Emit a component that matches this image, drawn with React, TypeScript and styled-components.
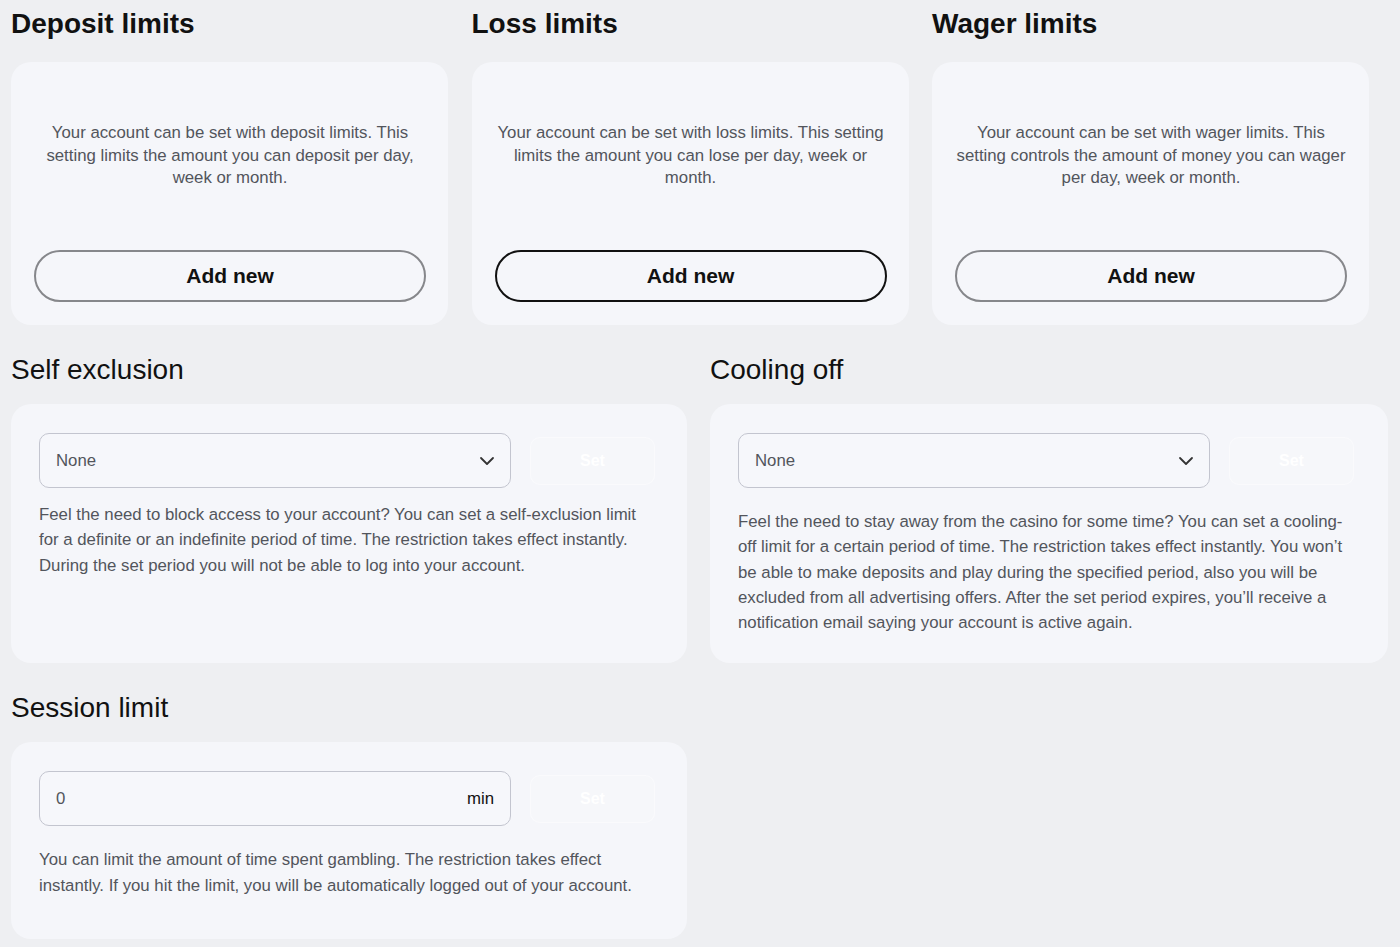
import styled, { createGlobalStyle } from 'styled-components'
import { ChevronDown } from 'lucide-react'

const GlobalStyle = createGlobalStyle`
  * { box-sizing: border-box; }
  body {
    margin: 0;
    background: #eeeff2;
    font-family: "Liberation Sans", Arial, sans-serif;
    color: #111;
  }
`

const Page = styled.main`
  padding: 8px 0 0 11px;
  width: 1400px;
  min-height: 947px;
`

const TopGrid = styled.div`
  display: grid;
  grid-template-columns: repeat(3, 437px);
  column-gap: 23.5px;
`

const HalfGrid = styled.div`
  display: grid;
  grid-template-columns: 676px 678px;
  column-gap: 23px;
  margin-top: 29px;
`

const Section = styled.section`
  display: flex;
  flex-direction: column;
`

const Title = styled.h2<{ $bold?: boolean }>`
  margin: 0 0 ${p => (p.$bold ? 22 : 18)}px;
  font-size: 28px;
  line-height: 32px;
  font-weight: ${p => (p.$bold ? 700 : 400)};
  color: #111;
`

const LimitCard = styled.div`
  height: 263px;
  background: #f5f6fa;
  border-radius: 20px;
  padding: 0 22px 23px 23px;
  display: flex;
  flex-direction: column;
`

const LimitText = styled.p`
  flex: 1;
  margin: 0;
  display: flex;
  align-items: center;
  justify-content: center;
  text-align: center;
  font-size: 16.8px;
  line-height: 22.5px;
  color: #52555c;
`

const AddButton = styled.button<{ $dark?: boolean }>`
  height: 52px;
  width: 100%;
  border-radius: 26px;
  background: transparent;
  border: 2px solid ${p => (p.$dark ? '#111' : '#86878b')};
  font-family: inherit;
  font-size: 21px;
  font-weight: 700;
  color: #111;
  cursor: pointer;
`

const PanelCard = styled.div<{ $minH?: number }>`
  flex: 1;
  background: #f5f6fa;
  border-radius: 20px;
  padding: 29px 28px 28px;
  min-height: ${p => p.$minH ?? 0}px;
`

const ControlRow = styled.div`
  display: flex;
  align-items: center;
  gap: 19px;
`

const Field = styled.div`
  width: 472px;
  height: 55px;
  border: 1px solid #c3c5cf;
  border-radius: 10px;
  display: flex;
  align-items: center;
  justify-content: space-between;
  padding: 0 11px 0 16px;
  font-size: 16.8px;
  color: #52555c;
  background: #f6f7fb;
`

const FieldInput = styled.input`
  border: none;
  background: transparent;
  outline: none;
  font-family: inherit;
  font-size: 16.8px;
  color: #52555c;
  padding: 0;
  flex: 1;
`

const Unit = styled.span`
  color: #111;
  font-size: 16.8px;
  padding-right: 5px;
`

const SetButton = styled.button`
  width: 125px;
  height: 48px;
  border-radius: 10px;
  border: 1px solid rgba(255, 255, 255, 0.4);
  background: rgba(255, 255, 255, 0.1);
  color: #fff;
  font-family: inherit;
  font-size: 16px;
  font-weight: 700;
`

const PanelText = styled.p<{ $gap: number }>`
  margin: ${p => p.$gap}px 0 0;
  font-size: 16.8px;
  line-height: 25.3px;
  color: #52555c;
`

const limits = [
  {
    title: 'Deposit limits',
    text: 'Your account can be set with deposit limits. This setting limits the amount you can deposit per day, week or month.',
  },
  {
    title: 'Loss limits',
    text: 'Your account can be set with loss limits. This setting limits the amount you can lose per day, week or month.',
    dark: true,
  },
  {
    title: 'Wager limits',
    text: 'Your account can be set with wager limits. This setting controls the amount of money you can wager per day, week or month.',
  },
]

function SelectField() {
  return (
    <Field>
      <span>None</span>
      <ChevronDown size={24} strokeWidth={1.8} color="#333" />
    </Field>
  )
}

export default function App() {
  return (
    <Page>
      <GlobalStyle />
      <TopGrid>
        {limits.map(l => (
          <Section key={l.title}>
            <Title $bold>{l.title}</Title>
            <LimitCard>
              <LimitText>{l.text}</LimitText>
              <AddButton $dark={l.dark}>Add new</AddButton>
            </LimitCard>
          </Section>
        ))}
      </TopGrid>

      <HalfGrid>
        <Section>
          <Title>Self exclusion</Title>
          <PanelCard>
            <ControlRow>
              <SelectField />
              <SetButton>Set</SetButton>
            </ControlRow>
            <PanelText $gap={14}>
              Feel the need to block access to your account? You can set a self-exclusion limit for a
              definite or an indefinite period of time. The restriction takes effect instantly. During
              the set period you will not be able to log into your account.
            </PanelText>
          </PanelCard>
        </Section>
        <Section>
          <Title>Cooling off</Title>
          <PanelCard>
            <ControlRow>
              <SelectField />
              <SetButton>Set</SetButton>
            </ControlRow>
            <PanelText $gap={21}>
              Feel the need to stay away from the casino for some time? You can set a cooling-off limit
              for a certain period of time. The restriction takes effect instantly. You won’t be able to
              make deposits and play during the specified period, also you will be excluded from all
              advertising offers. After the set period expires, you’ll receive a notification email
              saying your account is active again.
            </PanelText>
          </PanelCard>
        </Section>
      </HalfGrid>

      <HalfGrid>
        <Section>
          <Title>Session limit</Title>
          <PanelCard $minH={197}>
            <ControlRow>
              <Field>
                <FieldInput defaultValue="0" />
                <Unit>min</Unit>
              </Field>
              <SetButton>Set</SetButton>
            </ControlRow>
            <PanelText $gap={21}>
              You can limit the amount of time spent gambling. The restriction takes effect instantly. If
              you hit the limit, you will be automatically logged out of your account.
            </PanelText>
          </PanelCard>
        </Section>
      </HalfGrid>
    </Page>
  )
}
